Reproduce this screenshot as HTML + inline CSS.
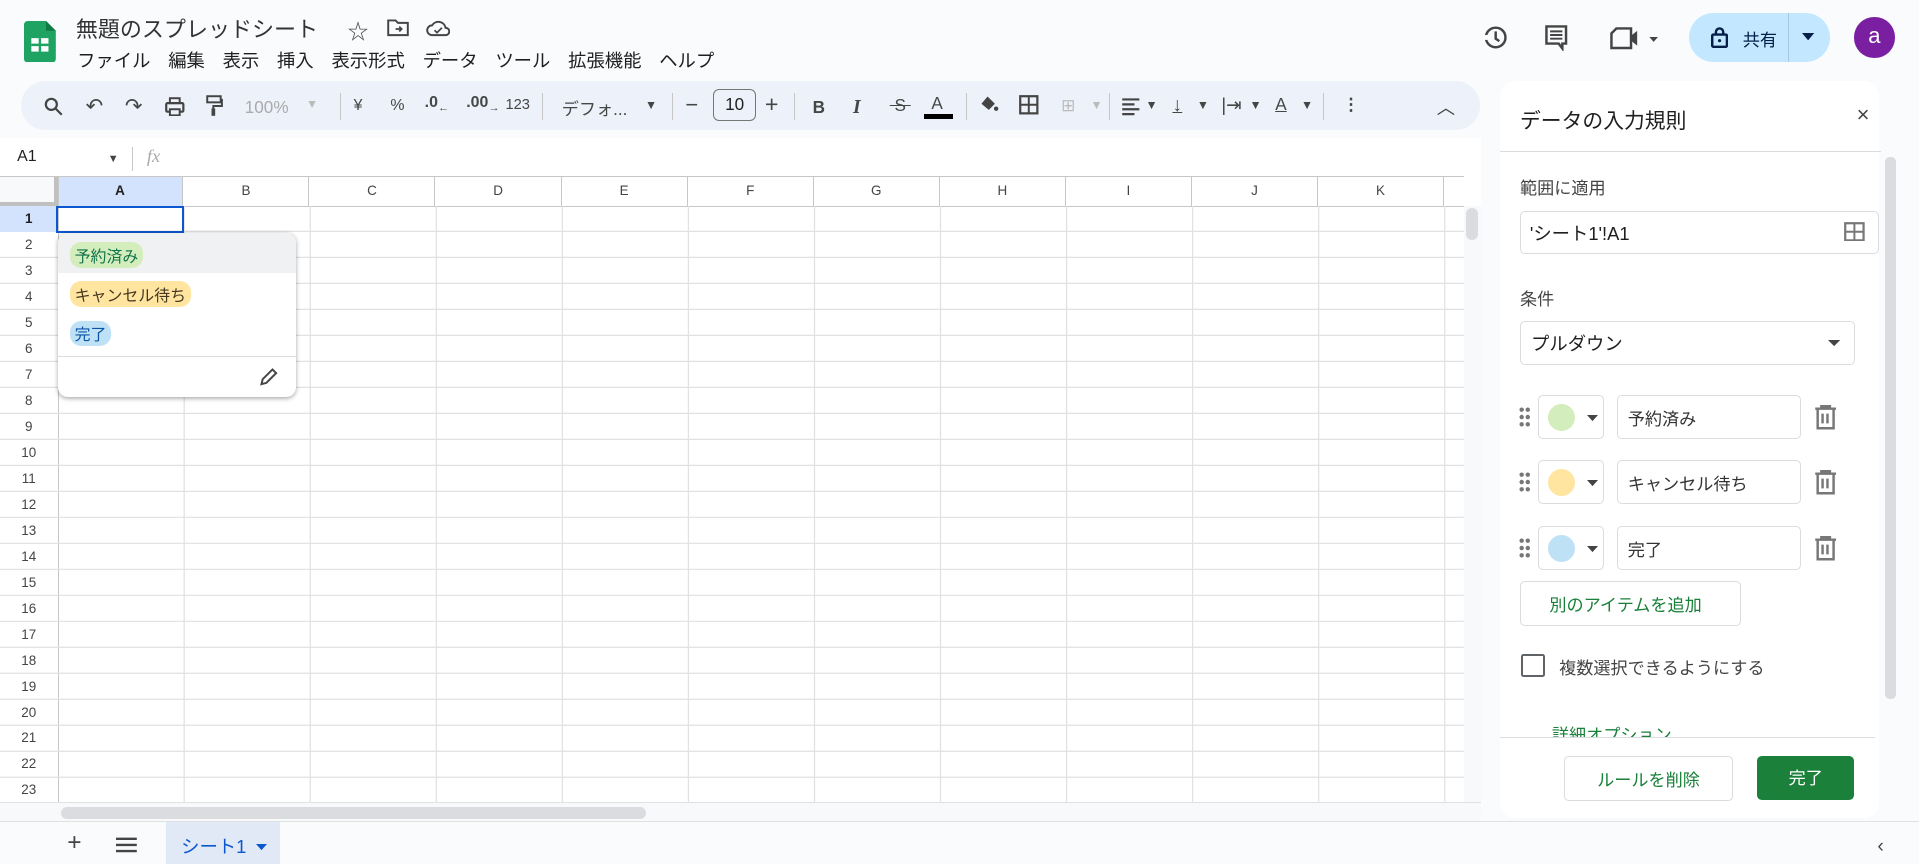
<!DOCTYPE html>
<html><head><meta charset="utf-8"><style>
html{zoom:1.22385}
body{margin:0;width:1568px;height:706px;overflow:hidden;background:#f9fbfd;font-family:"Liberation Sans","Noto Sans CJK JP",sans-serif;position:relative;color:#1f1f1f}
.a{position:absolute}
.t{white-space:nowrap}
.menu span{margin-right:14.5px}
.tb{font-size:13px;color:#444746}
.ch{position:absolute;top:145px;height:23px;font-size:11px;color:#444;text-align:center;line-height:23px;border-right:1px solid #c7c7c7}
.rh{position:absolute;left:0;width:47px;height:21.24px;font-size:11px;color:#444;text-align:center;line-height:21px}
.chip{display:inline-block;border-radius:9px;padding:1px 4px;font-size:13px}
.box{position:absolute;border:1px solid #dadce0;border-radius:4px;background:#fff}
</style></head><body>
<svg class="a" style="left:20px;top:17px" width="26" height="34" viewBox="0 0 26 34"><path d="M0 3a3 3 0 0 1 3-3h15l8 8v23a3 3 0 0 1-3 3H3a3 3 0 0 1-3-3z" fill="#1ea362"/><path d="M18 0v8h8z" fill="#0f7a43"/><rect x="6" y="14" width="14" height="11" fill="#fff"/><path d="M6 19.5h14M13 14v11" stroke="#1ea362" stroke-width="2"/></svg>
<div class="a t" style="left:62px;top:10px;font-size:18px;color:#333">無題のスプレッドシート</div>
<div class="a t" style="left:284px;top:12px;font-size:17px;color:#444">☆</div>
<svg class="a" style="left:316px;top:15px" width="18" height="15"><path d="M1 2h6l2 2h8v10H1z" fill="none" stroke="#444" stroke-width="1.6"/><path d="M7 9h5M10 7l2 2-2 2" stroke="#444" stroke-width="1.4" fill="none"/></svg>
<svg class="a" style="left:348px;top:15px" width="20" height="15"><path d="M5 14a4 4 0 0 1 0-8 6 6 0 0 1 11 2 3 3 0 0 1 0 6z" fill="none" stroke="#444" stroke-width="1.6"/><path d="M7 10l2 2 4-4" stroke="#444" stroke-width="1.4" fill="none"/></svg>
<div class="a t menu" style="left:63px;top:38px;font-size:15px;color:#1f1f1f"><span>ファイル</span><span>編集</span><span>表示</span><span>挿入</span><span>表示形式</span><span>データ</span><span>ツール</span><span>拡張機能</span><span>ヘルプ</span></div>
<svg class="a" style="left:1210px;top:20px" width="22" height="22"><circle cx="12" cy="11" r="8" fill="none" stroke="#444" stroke-width="2"/><path d="M12 6v6l3 2" stroke="#444" stroke-width="2" fill="none"/><rect x="1" y="9" width="5" height="4" fill="#f9fbfd"/></svg>
<svg class="a" style="left:1262px;top:20px" width="20" height="22"><path d="M2 2h16v14h-3v4l-3-4H2z" fill="none" stroke="#444" stroke-width="2"/><path d="M5 6h10M5 9h10M5 12h10" stroke="#444" stroke-width="1.6"/></svg>
<svg class="a" style="left:1315px;top:21px" width="44" height="20"><path d="M2 6l4-4h12v16H2z" fill="none" stroke="#444" stroke-width="2"/><path d="M18 8l5-4v12l-5-4z" fill="#444"/><path d="M33 9h7l-3.5 4z" fill="#444"/></svg>
<div class="a" style="left:1380px;top:11px;width:115px;height:40px;border-radius:20px;background:#c2e7ff"></div>
<div class="a" style="left:1461px;top:11px;width:1px;height:40px;background:#a8c7e0"></div>
<svg class="a" style="left:1398px;top:21px" width="14" height="18"><rect x="1" y="7" width="12" height="10" rx="1" fill="none" stroke="#041e49" stroke-width="2"/><path d="M4 7V5a3 3 0 0 1 6 0v2" fill="none" stroke="#041e49" stroke-width="2"/><circle cx="7" cy="12" r="1.3" fill="#041e49"/></svg>
<div class="a t" style="left:1424px;top:21px;font-size:14px;color:#041e49">共有</div>
<svg class="a" style="left:1472px;top:27px" width="10" height="6"><path d="M0 0h10L5 6z" fill="#041e49"/></svg>
<div class="a" style="left:1515px;top:14px;width:33px;height:33px;border-radius:50%;background:#7b1fa2;color:#fff;font-size:18px;text-align:center;line-height:31px">a</div>
<div class="a" style="left:17px;top:66px;width:1192px;height:40px;border-radius:20px;background:#edf2fa"></div>
<div class="a t tb" style="left:36px;top:78px;font-size:14px;width:1160px">
<svg class="a" style="left:0;top:1px" width="16" height="16"><circle cx="6" cy="6" r="4.5" fill="none" stroke="#444" stroke-width="1.8"/><path d="M9.5 9.5l5 5" stroke="#444" stroke-width="1.8"/></svg>
<span class="a" style="left:34px;top:-1px;font-size:17px">↶</span><span class="a" style="left:66px;top:-1px;font-size:17px">↷</span>
<svg class="a" style="left:99px;top:1px" width="16" height="16"><rect x="1" y="5" width="14" height="7" rx="1" fill="none" stroke="#444" stroke-width="1.8"/><rect x="4" y="1" width="8" height="4" fill="none" stroke="#444" stroke-width="1.6"/><rect x="4" y="10" width="8" height="5" fill="#edf2fa" stroke="#444" stroke-width="1.6"/></svg>
<svg class="a" style="left:132px;top:0" width="14" height="18"><rect x="1" y="1" width="11" height="5" fill="none" stroke="#444" stroke-width="1.6"/><path d="M12 4h1v5H6v3" fill="none" stroke="#444" stroke-width="1.6"/><rect x="4.5" y="11" width="3" height="6" fill="#444"/></svg>
<span class="a" style="left:164px;top:1px;color:#aaa">100%</span><span class="a" style="left:214px;top:1px;color:#bbb;font-size:10px">▼</span>
<span class="a" style="left:242px;top:-2px;width:1px;height:22px;background:#c7c7c7"></span>
<span class="a" style="left:253px;top:1px;font-size:13px">¥</span><span class="a" style="left:283px;top:1px;font-size:13px">%</span>
<span class="a" style="left:311px;top:-1px;font-size:13px;font-weight:bold">.0<sub style="font-size:9px">←</sub></span><span class="a" style="left:345px;top:-1px;font-size:13px;font-weight:bold">.00<sub style="font-size:9px">→</sub></span>
<span class="a" style="left:377px;top:1px;font-size:12px">123</span>
<span class="a" style="left:407px;top:-2px;width:1px;height:22px;background:#c7c7c7"></span>
<span class="a" style="left:423px;top:0;font-size:14px">デフォ...</span><span class="a" style="left:491px;top:2px;font-size:10px">▼</span>
<span class="a" style="left:513px;top:-2px;width:1px;height:22px;background:#c7c7c7"></span>
<span class="a" style="left:524px;top:-3px;font-size:18px">−</span>
<span class="a" style="left:547px;top:-5px;width:33px;height:24px;border:1px solid #747775;border-radius:5px;text-align:center;line-height:24px;font-size:14px;color:#1f1f1f">10</span>
<span class="a" style="left:589px;top:-4px;font-size:19px">+</span>
<span class="a" style="left:613px;top:-2px;width:1px;height:22px;background:#c7c7c7"></span>
<span class="a" style="left:628px;top:1px;font-weight:bold">B</span><span class="a" style="left:661px;top:1px;font-style:italic;font-family:'Liberation Serif';font-weight:bold;font-size:16px">I</span>
<span class="a" style="left:691px;top:0;text-decoration:line-through">&nbsp;S&nbsp;</span>
<span class="a" style="left:725px;top:-2px">A</span><span class="a" style="left:719px;top:15px;width:24px;height:4px;background:#000"></span>
<span class="a" style="left:753px;top:-2px;width:1px;height:22px;background:#c7c7c7"></span>
<svg class="a" style="left:764px;top:-1px" width="16" height="16"><path d="M2 8l5-6 6 6-5 5z" fill="#444"/><circle cx="14" cy="12" r="1.8" fill="#444"/></svg>
<svg class="a" style="left:797px;top:0" width="16" height="16"><rect x="1" y="1" width="14" height="14" fill="none" stroke="#444" stroke-width="1.8"/><path d="M8 1v14M1 8h14" stroke="#444" stroke-width="1.6"/></svg>
<span class="a" style="left:831px;top:0;color:#bbb">⊞</span><span class="a" style="left:855px;top:2px;font-size:10px;color:#bbb">▼</span>
<span class="a" style="left:870px;top:-2px;width:1px;height:22px;background:#c7c7c7"></span>
<svg class="a" style="left:880px;top:1px" width="16" height="16"><path d="M1 2h14M1 6h10M1 10h14M1 14h10" stroke="#444" stroke-width="1.8"/></svg><span class="a" style="left:900px;top:2px;font-size:10px">▼</span>
<span class="a" style="left:922px;top:-1px;font-size:16px;text-decoration:underline">↓</span><span class="a" style="left:942px;top:2px;font-size:10px">▼</span>
<span class="a" style="left:962px;top:-1px;font-size:15px">|⇥</span><span class="a" style="left:985px;top:2px;font-size:10px">▼</span>
<span class="a" style="left:1006px;top:-1px;text-decoration:underline">A</span><span class="a" style="left:1027px;top:2px;font-size:10px">▼</span>
<span class="a" style="left:1045px;top:-2px;width:1px;height:22px;background:#c7c7c7"></span>
<span class="a" style="left:1061px;top:-1px;font-weight:bold">⋮</span>
<span class="a" style="left:1138px;top:-1px;font-size:15px">︿</span>
</div>
<div class="a" style="left:0;top:113px;width:1210px;height:31px;background:#fff"></div>
<div class="a t" style="left:14px;top:121px;font-size:13px">A1</div>
<div class="a" style="left:88px;top:125px;font-size:9px;color:#444">▼</div>
<div class="a" style="left:108px;top:120px;width:1px;height:20px;background:#c7c7c7"></div>
<div class="a t" style="left:120px;top:119px;font-size:15px;color:#aaa;font-style:italic;font-family:'Liberation Serif'">fx</div>
<div class="a" style="left:0;top:144px;width:1210px;height:527px;background:#fff"></div>
<div class="a" style="left:0;top:144px;width:1196px;height:1px;background:#c7c7c7"></div>
<div class="a" style="left:0;top:145px;width:47px;height:23px;background:#f8f9fa;border-right:4px solid #c0c0c0;box-sizing:border-box;border-bottom:4px solid #c0c0c0"></div>
<div class="ch" style="left:47px;width:102px;background:#d3e3fd;color:#1f1f1f;font-weight:bold">A</div>
<div class="ch" style="left:150px;width:102px">B</div><div class="ch" style="left:253px;width:102px">C</div><div class="ch" style="left:356px;width:102px">D</div><div class="ch" style="left:459px;width:102px">E</div><div class="ch" style="left:562px;width:102px">F</div><div class="ch" style="left:665px;width:102px">G</div><div class="ch" style="left:768px;width:102px">H</div><div class="ch" style="left:871px;width:102px">I</div><div class="ch" style="left:974px;width:102px">J</div><div class="ch" style="left:1077px;width:102px">K</div>
<div class="a" style="left:0;top:168px;width:1196px;height:1px;background:#c7c7c7"></div>
<div class="a" style="left:47px;top:145px;width:1px;height:510px;background:#c7c7c7"></div>
<svg class="a" style="left:0;top:168px" width="1196" height="487">
<g stroke="#e1e1e1" stroke-width="1">
<path d="M150.5 0V487M253.5 0V487M356.5 0V487M459.5 0V487M562.5 0V487M665.5 0V487M768.5 0V487M871.5 0V487M974.5 0V487M1077.5 0V487M1180.5 0V487"/>
<path d="M0 20.74H1196M0 41.98H1196M0 63.22H1196M0 84.46H1196M0 105.7H1196M0 126.94H1196M0 148.18H1196M0 169.42H1196M0 190.66H1196M0 211.9H1196M0 233.14H1196M0 254.38H1196M0 275.62H1196M0 296.86H1196M0 318.1H1196M0 339.34H1196M0 360.58H1196M0 381.82H1196M0 403.06H1196M0 424.3H1196M0 445.54H1196M0 466.78H1196M0 488.02H1196"/>
</g></svg>
<div class="rh" style="top:168px;background:#d3e3fd;color:#1f1f1f;font-weight:bold">1</div>
<div class="rh" style="top:189.24px">2</div><div class="rh" style="top:210.48px">3</div><div class="rh" style="top:231.72px">4</div><div class="rh" style="top:252.96px">5</div><div class="rh" style="top:274.2px">6</div><div class="rh" style="top:295.44px">7</div><div class="rh" style="top:316.68px">8</div><div class="rh" style="top:337.92px">9</div><div class="rh" style="top:359.16px">10</div><div class="rh" style="top:380.4px">11</div><div class="rh" style="top:401.64px">12</div><div class="rh" style="top:422.88px">13</div><div class="rh" style="top:444.12px">14</div><div class="rh" style="top:465.36px">15</div><div class="rh" style="top:486.6px">16</div><div class="rh" style="top:507.84px">17</div><div class="rh" style="top:529.08px">18</div><div class="rh" style="top:550.32px">19</div><div class="rh" style="top:571.56px">20</div><div class="rh" style="top:592.8px">21</div><div class="rh" style="top:614.04px">22</div><div class="rh" style="top:635.28px">23</div>
<div class="a" style="left:46px;top:168px;width:101px;height:19px;border:2px solid #0b57d0"></div>
<div class="a" style="left:1196px;top:168px;width:14px;height:487px;background:#f8f9fa"></div>
<div class="a" style="left:1198px;top:170px;width:10px;height:26px;border-radius:5px;background:#dadce0"></div>
<div class="a" style="left:0;top:655px;width:1210px;height:16px;background:#f8f9fa;border-top:1px solid #e1e1e1"></div>
<div class="a" style="left:50px;top:659px;width:478px;height:10px;border-radius:5px;background:#dadce0"></div>
<div class="a" style="left:47px;top:190px;width:195px;height:134px;background:#fff;border-radius:8px;box-shadow:0 1px 4px rgba(0,0,0,.35);overflow:hidden">
<div style="height:33px;background:#f0f1f3"></div>
<div class="a" style="left:10px;top:8px"><span class="chip" style="background:#d4edbc;color:#11734b">予約済み</span></div>
<div class="a" style="left:10px;top:40px"><span class="chip" style="background:#ffe5a0;color:#473821">キャンセル待ち</span></div>
<div class="a" style="left:10px;top:72px"><span class="chip" style="background:#bfe1f6;color:#0a53a8">完了</span></div>
<div class="a" style="left:0;top:101px;width:195px;height:1px;background:#dadce0"></div>
<svg class="a" style="left:165px;top:110px" width="16" height="16"><path d="M2 14l1-4 8-8 3 3-8 8z" fill="none" stroke="#444" stroke-width="1.6"/></svg>
</div>
<div class="a" style="left:1226px;top:66px;width:309px;height:602px;background:#fff;border-radius:12px"></div>
<div class="a t" style="left:1242px;top:85px;font-size:17px;color:#1f1f1f">データの入力規則</div>
<div class="a" style="left:1517px;top:83px;font-size:18px;color:#444">×</div>
<div class="a" style="left:1226px;top:123px;width:311px;height:1px;background:#dadce0"></div>
<div class="a" style="left:1540px;top:128px;width:9px;height:443px;border-radius:4px;background:#dadce0"></div>
<div class="a t" style="left:1242px;top:142px;font-size:14px;color:#444">範囲に適用</div>
<div class="box" style="left:1242px;top:172px;width:292px;height:34px"></div>
<div class="a t" style="left:1250px;top:180px;font-size:15px">'シート1'!A1</div>
<svg class="a" style="left:1507px;top:181px" width="17" height="16"><rect x="1" y="1" width="15" height="14" fill="none" stroke="#777" stroke-width="1.8"/><path d="M8.5 1v14M1 8h15" stroke="#777" stroke-width="1.6"/></svg>
<div class="a t" style="left:1242px;top:233px;font-size:14px;color:#444">条件</div>
<div class="box" style="left:1242px;top:262px;width:272px;height:35px"></div>
<div class="a t" style="left:1251px;top:270px;font-size:15px">プルダウン</div>
<svg class="a" style="left:1494px;top:278px" width="10" height="5"><path d="M0 0h10L5 5z" fill="#444"/></svg>
<div class="a" style="left:0;top:323px">
<svg class="a" style="left:1240px;top:9px" width="12" height="18"><g fill="#777"><circle cx="3" cy="3" r="1.8"/><circle cx="8" cy="3" r="1.8"/><circle cx="3" cy="9" r="1.8"/><circle cx="8" cy="9" r="1.8"/><circle cx="3" cy="15" r="1.8"/><circle cx="8" cy="15" r="1.8"/></g></svg>
<div class="box" style="left:1257px;top:0;width:52px;height:34px"></div>
<div class="a" style="left:1265px;top:7px;width:22px;height:22px;border-radius:50%;background:#d4edbc"></div>
<svg class="a" style="left:1297px;top:16px" width="9" height="5"><path d="M0 0h9L4.5 5z" fill="#444"/></svg>
<div class="box" style="left:1321px;top:0;width:149px;height:34px"></div>
<div class="a t" style="left:1330px;top:8px;font-size:14px;color:#333">予約済み</div>
<svg class="a" style="left:1482px;top:8px" width="19" height="21"><path d="M1 3h17M6 3V1h7v2M3 3v16h13V3M7 7v8M11 7v8" fill="none" stroke="#777" stroke-width="2"/></svg>
</div>
<div class="a" style="left:0;top:376px">
<svg class="a" style="left:1240px;top:9px" width="12" height="18"><g fill="#777"><circle cx="3" cy="3" r="1.8"/><circle cx="8" cy="3" r="1.8"/><circle cx="3" cy="9" r="1.8"/><circle cx="8" cy="9" r="1.8"/><circle cx="3" cy="15" r="1.8"/><circle cx="8" cy="15" r="1.8"/></g></svg>
<div class="box" style="left:1257px;top:0;width:52px;height:34px"></div>
<div class="a" style="left:1265px;top:7px;width:22px;height:22px;border-radius:50%;background:#ffe5a0"></div>
<svg class="a" style="left:1297px;top:16px" width="9" height="5"><path d="M0 0h9L4.5 5z" fill="#444"/></svg>
<div class="box" style="left:1321px;top:0;width:149px;height:34px"></div>
<div class="a t" style="left:1330px;top:8px;font-size:14px;color:#333">キャンセル待ち</div>
<svg class="a" style="left:1482px;top:8px" width="19" height="21"><path d="M1 3h17M6 3V1h7v2M3 3v16h13V3M7 7v8M11 7v8" fill="none" stroke="#777" stroke-width="2"/></svg>
</div>
<div class="a" style="left:0;top:430px">
<svg class="a" style="left:1240px;top:9px" width="12" height="18"><g fill="#777"><circle cx="3" cy="3" r="1.8"/><circle cx="8" cy="3" r="1.8"/><circle cx="3" cy="9" r="1.8"/><circle cx="8" cy="9" r="1.8"/><circle cx="3" cy="15" r="1.8"/><circle cx="8" cy="15" r="1.8"/></g></svg>
<div class="box" style="left:1257px;top:0;width:52px;height:34px"></div>
<div class="a" style="left:1265px;top:7px;width:22px;height:22px;border-radius:50%;background:#bfe1f6"></div>
<svg class="a" style="left:1297px;top:16px" width="9" height="5"><path d="M0 0h9L4.5 5z" fill="#444"/></svg>
<div class="box" style="left:1321px;top:0;width:149px;height:34px"></div>
<div class="a t" style="left:1330px;top:8px;font-size:14px;color:#333">完了</div>
<svg class="a" style="left:1482px;top:8px" width="19" height="21"><path d="M1 3h17M6 3V1h7v2M3 3v16h13V3M7 7v8M11 7v8" fill="none" stroke="#777" stroke-width="2"/></svg>
</div>
<div class="box" style="left:1242px;top:475px;width:179px;height:35px"></div>
<div class="a t" style="left:1266px;top:483px;font-size:14px;color:#188038">別のアイテムを追加</div>
<div class="a" style="left:1243px;top:534px;width:16px;height:16px;border:2px solid #5f6368;border-radius:2px"></div>
<div class="a t" style="left:1274px;top:534px;font-size:14px;color:#444">複数選択できるようにする</div>
<div class="a" style="left:1226px;top:586px;width:306px;height:17px;overflow:hidden"><div class="a t" style="left:42px;top:3px;font-size:14px;color:#188038">詳細オプション</div></div>
<div class="a" style="left:1226px;top:602px;width:306px;height:1px;background:#dadce0"></div>
<div class="box" style="left:1278px;top:618px;width:136px;height:35px"></div>
<div class="a t" style="left:1278px;top:626px;width:138px;text-align:center;font-size:14px;color:#188038">ルールを削除</div>
<div class="a" style="left:1436px;top:618px;width:79px;height:36px;background:#1b8039;border-radius:4px;color:#fff;font-size:14px;text-align:center;line-height:36px">完了</div>
<div class="a" style="left:0;top:671px;width:1568px;height:1px;background:#e1e1e1"></div>
<div class="a" style="left:55px;top:677px;font-size:20px;color:#444">+</div>
<svg class="a" style="left:95px;top:684px" width="17" height="13"><path d="M0 1.5h17M0 6.5h17M0 11.5h17" stroke="#444" stroke-width="2"/></svg>
<div class="a" style="left:136px;top:672px;width:93px;height:34px;background:#e1e9f7"></div>
<div class="a t" style="left:148px;top:681px;font-size:15px;color:#0b57d0">シート1</div>
<svg class="a" style="left:209px;top:690px" width="9" height="5"><path d="M0 0h9L4.5 5z" fill="#0b57d0"/></svg>
<div class="a" style="left:1534px;top:682px;font-size:16px;color:#444">‹</div>
</body></html>
